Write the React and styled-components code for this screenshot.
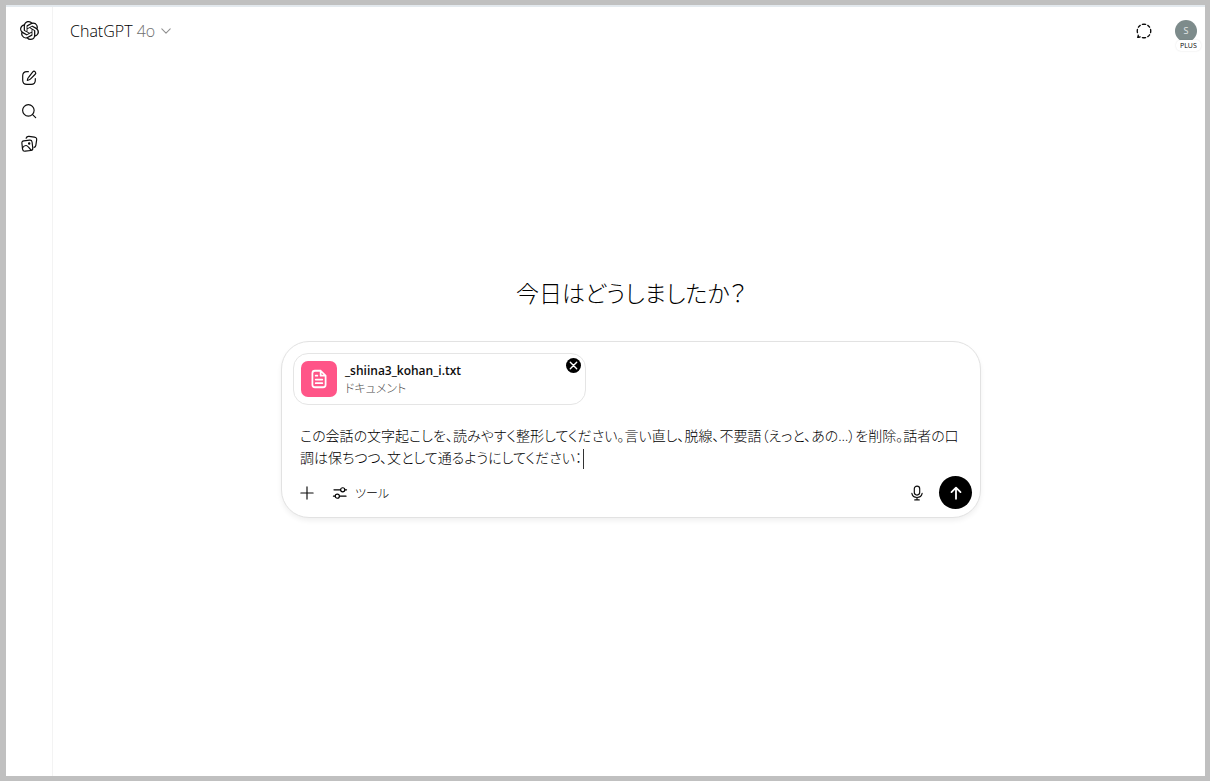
import React, { useState } from "react";
import styled, { createGlobalStyle } from "styled-components";
import { SiOpenai } from "react-icons/si";

const latin = `"Open Sans", "Noto Sans CJK JP", sans-serif`;
const japanese = `"Noto Sans CJK JP", sans-serif`;

const GlobalStyle = createGlobalStyle`
  *, *::before, *::after { box-sizing: border-box; }
  body {
    margin: 0;
    background: #c0c0c0;
    color: #0d0d0d;
    font-family: ${latin};
  }
  button, textarea { font: inherit; color: inherit; }
`;

const Frame = styled.div`
  min-height: 100vh;
  padding: 5px 5px 5px 6px;
  display: flex;
`;

const Window = styled.div`
  flex: 1;
  display: flex;
  min-width: 0;
  background: #fff;
  border-top: 2px solid #e3e9ee;
`;

const Sidebar = styled.nav`
  flex: none;
  width: 47px;
  display: flex;
  flex-direction: column;
  align-items: center;
  padding-top: 7px;
  border-right: 1px solid #f3f3f3;
`;

const IconButton = styled.button`
  display: flex;
  align-items: center;
  justify-content: center;
  width: 33px;
  height: 33px;
  padding: 0;
  border: 0;
  border-radius: 8px;
  background: none;
  color: #0d0d0d;
  cursor: pointer;
`;

const LogoButton = styled(IconButton)`
  margin-bottom: 14px;
`;

const Main = styled.main`
  flex: 1;
  min-width: 0;
  display: flex;
  flex-direction: column;
`;

const Header = styled.header`
  display: flex;
  align-items: center;
  justify-content: space-between;
  height: 47px;
  padding: 0 8px 0 17px;
`;

const ModelButton = styled.button`
  display: flex;
  align-items: center;
  gap: 4px;
  padding: 0;
  border: 0;
  background: none;
  color: #000;
  font-size: 16px;
  font-weight: 300;
  line-height: 24px;
  cursor: pointer;

  svg {
    color: #8f8f8f;
  }
`;

const ModelVersion = styled.span`
  color: #6f6f6f;
`;

const HeaderActions = styled.div`
  display: flex;
  align-items: center;
  gap: 15px;
`;

const Account = styled.button`
  position: relative;
  padding: 0;
  border: 0;
  background: none;
  cursor: pointer;
`;

const Avatar = styled.span`
  display: flex;
  align-items: center;
  justify-content: center;
  width: 22px;
  height: 22px;
  border-radius: 50%;
  background: #7d8b8b;
  color: #e4e8e8;
  font-size: 9px;
`;

const PlanBadge = styled.span`
  position: absolute;
  top: 20px;
  left: 1px;
  padding: 0 4px;
  border-radius: 5px;
  background: #fff;
  box-shadow: 0 0 2px rgba(0, 0, 0, 0.12);
  color: #000;
  font-size: 7px;
  line-height: 11px;
`;

const Welcome = styled.section`
  flex: 1;
  display: flex;
  flex-direction: column;
  align-items: center;
  padding: 218px 16px 32px 20px;
`;

const Title = styled.h1`
  margin: 0 0 29px;
  color: #000;
  font-family: ${japanese};
  font-size: 23px;
  font-weight: 300;
  line-height: 40px;
  font-feature-settings: "palt";
`;

const Composer = styled.form`
  width: 100%;
  max-width: 700px;
  padding: 11px 8px 8px 11px;
  border: 1px solid #e2e2e2;
  border-radius: 28px;
  background: #fff;
  box-shadow: 0 3px 5px rgba(0, 0, 0, 0.06);
`;

const FileCard = styled.div`
  position: relative;
  display: flex;
  align-items: center;
  gap: 8px;
  width: 293px;
  max-width: 100%;
  height: 52px;
  padding: 0 7px;
  border: 1px solid #e5e5e5;
  border-radius: 15px;
`;

const FileIcon = styled.span`
  display: flex;
  align-items: center;
  justify-content: center;
  width: 36px;
  height: 36px;
  border-radius: 7px;
  background: #ff5588;
  color: #fff;
`;

const FileText = styled.div`
  display: flex;
  flex-direction: column;
  font-size: 12px;
  line-height: 17px;
`;

const FileName = styled.span`
  font-weight: 600;
`;

const FileKind = styled.span`
  color: #4d4d4d;
  font-family: ${japanese};
  font-size: 12px;
  font-weight: 300;
  font-feature-settings: "palt";
`;

const RemoveButton = styled.button`
  position: absolute;
  top: 4px;
  right: 4px;
  display: flex;
  padding: 0;
  border: 0;
  border-radius: 50%;
  background: none;
  cursor: pointer;
`;

const PromptField = styled.div`
  display: grid;
  margin: 20px 6px 7px 7px;
  font-family: ${latin};
  font-size: 14px;
  font-weight: 300;
  line-height: 22px;
  font-feature-settings: "palt";
  white-space: pre-wrap;
  overflow-wrap: break-word;
`;

const PromptInput = styled.textarea`
  grid-area: 1 / 1;
  width: 100%;
  padding: 0;
  border: 0;
  outline: none;
  resize: none;
  overflow: hidden;
  background: none;
  color: #000;
  caret-color: transparent;
  font-feature-settings: inherit;
  white-space: inherit;
`;

const PromptMirror = styled.div`
  grid-area: 1 / 1;
  min-height: 44px;
  visibility: hidden;
  pointer-events: none;
`;

const Caret = styled.span`
  visibility: visible;
  display: inline-block;
  width: 1px;
  height: 20px;
  margin-left: 1px;
  vertical-align: middle;
  background: #333;
`;

const Toolbar = styled.div`
  display: flex;
  align-items: center;
  justify-content: space-between;
`;

const ToolGroup = styled.div`
  display: flex;
  align-items: center;
  gap: 6px;
`;

const AddButton = styled(IconButton)`
  width: 28px;
`;

const ToolsButton = styled.button`
  display: flex;
  align-items: center;
  gap: 6px;
  height: 33px;
  padding: 0 4px;
  border: 0;
  background: none;
  color: #000;
  font-family: ${japanese};
  font-size: 12px;
  font-weight: 300;
  font-feature-settings: "palt";
  cursor: pointer;
`;

const SendButton = styled(IconButton)`
  border-radius: 50%;
  background: #000;
  color: #fff;
`;

function Icon({ size = 18, width = 1.3, children }) {
  return (
    <svg
      width={size}
      height={size}
      viewBox="0 0 20 20"
      fill="none"
      stroke="currentColor"
      strokeWidth={width}
      strokeLinecap="round"
      strokeLinejoin="round"
      aria-hidden="true"
    >
      {children}
    </svg>
  );
}

const EditIcon = () => (
  <Icon>
    <path d="M9.3 3H7.6C4.6 3 3 4.6 3 7.6v4.8c0 3 1.6 4.6 4.6 4.6h4.8c3 0 4.6-1.6 4.6-4.6v-1.7" />
    <path d="M14.2 3.1a1.9 1.9 0 0 1 2.7 2.7l-5.4 5.4c-.7.7-1.6 1.1-3.4 1.5.3-1.8.7-2.7 1.4-3.4z" />
  </Icon>
);

const SearchIcon = () => (
  <Icon>
    <circle cx="9.3" cy="9.3" r="6.4" />
    <path d="M14 14l3.4 3.4" />
  </Icon>
);

const LibraryIcon = () => (
  <Icon>
    <path d="M6.800 3.600c.5-1.600 1.600-2.300 3.200-2.100l6 .8c1.900.3 2.800 1.400 2.500 3.200l-.9 6c-.2 1.300-.8 2-2 2.300" />
    <path d="M4.200 6.500l6.400-.8c1.600-.2 2.600.6 2.800 2.100l.8 6.600c.2 1.600-.6 2.600-2.100 2.800l-6.400.8c-1.600.2-2.600-.6-2.800-2.100l-.8-6.600c-.2-1.600.5-2.600 2.100-2.800z" />
    <path d="M2.700 14.400c1.300-2 2.700-2.900 4.200-2.700 2.100.3 2.900 2.800 5.400 5" />
    <circle cx="10.200" cy="9.400" r=".7" fill="currentColor" />
  </Icon>
);

const ChevronIcon = () => (
  <Icon size={14} width={1.5}>
    <path d="M4 7l6 6 6-6" />
  </Icon>
);

const TemporaryChatIcon = () => (
  <Icon width={1.5}>
    <path d="M8.2 2.7a7.500 7.500 0 0 1 3.600 0M14.200 3.800a7.500 7.500 0 0 1 2 2M17.300 8.200a7.500 7.500 0 0 1 0 3.600M16.200 14.200a7.500 7.500 0 0 1-2 2M11.800 17.300a7.500 7.500 0 0 1-3.600 0M2.700 11.800a7.500 7.500 0 0 1 0-3.600M3.800 5.800a7.500 7.500 0 0 1 2-2M3.600 14.600c.2.900-.2 1.700-.7 2.400 1 0 1.900-.1 2.800-.5" />
  </Icon>
);

const DocumentIcon = () => (
  <Icon size={22} width={1.6}>
    <path d="M11.5 2.500H6.300C4.800 2.500 4 3.300 4 4.800v10.400c0 1.500.8 2.300 2.300 2.300h7.400c1.500 0 2.300-.8 2.300-2.300V7zM11.500 2.500V7H16M7 7h1.500M7 10.500h6M7 13.800h6" />
  </Icon>
);

const RemoveIcon = () => (
  <svg width="15" height="15" viewBox="0 0 15 15" aria-hidden="true">
    <circle cx="7.5" cy="7.5" r="7.5" fill="#000" />
    <path d="M4.3 4.3l6.4 6.4M10.700 4.300l-6.400 6.400" stroke="#fff" strokeWidth="1.4" strokeLinecap="round" />
  </svg>
);

const PlusIcon = () => (
  <Icon>
    <path d="M10 3.2v13.6M3.2 10h13.6" />
  </Icon>
);

const SlidersIcon = () => (
  <Icon>
    <path d="M3.300 6.500h7.200M15.500 6.500h1.800M2.700 13.500h1.800M9.500 13.500h7.200" />
    <circle cx="13" cy="6.5" r="2.3" />
    <circle cx="7" cy="13.5" r="2.3" />
  </Icon>
);

const MicIcon = () => (
  <Icon>
    <rect x="7" y="2.3" width="6" height="10" rx="3" />
    <path d="M4.300 10.500c.5 2.700 2.700 4.500 5.700 4.500s5.200-1.800 5.700-4.500M10 15v2.600M7.500 17.700h5" />
  </Icon>
);

const ArrowUpIcon = () => (
  <Icon width={2}>
    <path d="M10 16.500v-12M5 9l5-5 5 5" />
  </Icon>
);

export default function App() {
  const [prompt, setPrompt] = useState(
    "この会話の文字起こしを、読みやすく整形してください。言い直し、脱線、不要語（えっと、あの…）を削除。話者の口調は保ちつつ、文として通るようにしてください："
  );

  return (
    <>
      <GlobalStyle />
      <Frame>
        <Window>
          <Sidebar>
            <LogoButton aria-label="ホーム">
              <SiOpenai size={19} />
            </LogoButton>
            <IconButton aria-label="新しいチャット">
              <EditIcon />
            </IconButton>
            <IconButton aria-label="チャットを検索">
              <SearchIcon />
            </IconButton>
            <IconButton aria-label="ライブラリ">
              <LibraryIcon />
            </IconButton>
          </Sidebar>
          <Main>
            <Header>
              <ModelButton>
                <span>
                  ChatGPT <ModelVersion>4o</ModelVersion>
                </span>
                <ChevronIcon />
              </ModelButton>
              <HeaderActions>
                <IconButton aria-label="一時チャット">
                  <TemporaryChatIcon />
                </IconButton>
                <Account aria-label="アカウント">
                  <Avatar>S</Avatar>
                  <PlanBadge>PLUS</PlanBadge>
                </Account>
              </HeaderActions>
            </Header>
            <Welcome>
              <Title>今日はどうしましたか？</Title>
              <Composer onSubmit={(e) => e.preventDefault()}>
                <FileCard>
                  <FileIcon>
                    <DocumentIcon />
                  </FileIcon>
                  <FileText>
                    <FileName>_shiina3_kohan_i.txt</FileName>
                    <FileKind>ドキュメント</FileKind>
                  </FileText>
                  <RemoveButton type="button" aria-label="ファイルを削除">
                    <RemoveIcon />
                  </RemoveButton>
                </FileCard>
                <PromptField>
                  <PromptMirror aria-hidden="true">
                    {prompt}
                    <Caret />
                  </PromptMirror>
                  <PromptInput
                    aria-label="メッセージ"
                    value={prompt}
                    onChange={(e) => setPrompt(e.target.value)}
                  />
                </PromptField>
                <Toolbar>
                  <ToolGroup>
                    <AddButton type="button" aria-label="追加">
                      <PlusIcon />
                    </AddButton>
                    <ToolsButton type="button">
                      <SlidersIcon />
                      ツール
                    </ToolsButton>
                  </ToolGroup>
                  <ToolGroup>
                    <IconButton type="button" aria-label="音声入力">
                      <MicIcon />
                    </IconButton>
                    <SendButton type="submit" aria-label="送信">
                      <ArrowUpIcon />
                    </SendButton>
                  </ToolGroup>
                </Toolbar>
              </Composer>
            </Welcome>
          </Main>
        </Window>
      </Frame>
    </>
  );
}
